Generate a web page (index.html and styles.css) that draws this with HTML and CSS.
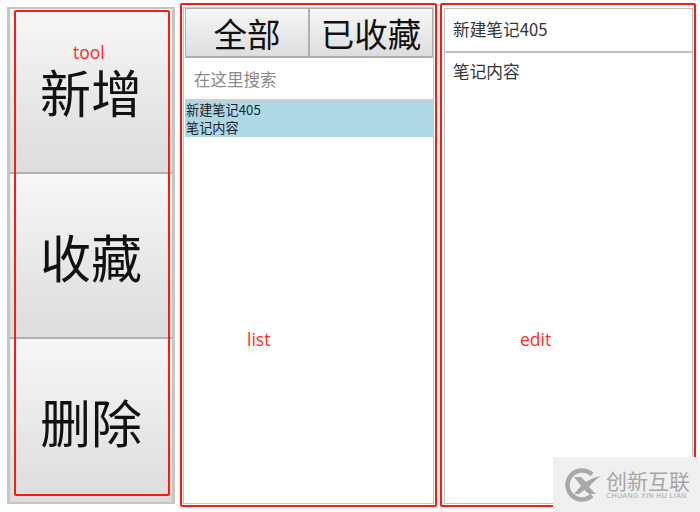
FILE: index.html
```html
<!DOCTYPE html>
<html lang="zh-CN">
<head>
<meta charset="utf-8">
<title>笔记</title>
<link rel="stylesheet" href="styles.css">
</head>
<body>
<main class="app">
  <section class="tool">
    <button class="big">新增</button>
    <button class="big">收藏</button>
    <button class="big">删除</button>
  </section>
  <section class="list">
    <div class="tabs">
      <button class="tab">全部</button>
      <button class="tab">已收藏</button>
    </div>
    <div class="search">在这里搜索</div>
    <div class="item">
      <div>新建笔记405</div>
      <div>笔记内容</div>
    </div>
  </section>
  <section class="edit">
    <div class="title">新建笔记405</div>
    <div class="content">笔记内容</div>
  </section>
</main>
<div class="mark mark-tool"></div>
<div class="mark mark-list"></div>
<div class="mark mark-edit"></div>
<span class="label label-tool">tool</span>
<span class="label label-list">list</span>
<span class="label label-edit">edit</span>
<div class="wm">
  <svg class="wm-logo" viewBox="0 0 36 34" width="36" height="34">
    <path d="M27 6.5 A14.5 14.5 0 1 0 27 27.5" fill="none" stroke="#a8a8a8" stroke-width="4.5"/>
    <path d="M9 9 L16 9 L21 14 C25 11 30 9 36 8 C31 11 27 15 24 19 L31 26 L24 26 L19.5 22 L14 26 L9 26 L16 18 Z" fill="#a8a8a8"/>
  </svg>
  <div class="wm-text">
    <div class="wm-cn">创新互联</div>
    <div class="wm-en">CHUANG XIN HU LIAN</div>
  </div>
</div>
</body>
</html>
```
FILE: styles.css
```css
* { box-sizing: border-box; }
html, body { margin: 0; height: 100%; }
body {
  position: relative;
  width: 700px;
  height: 512px;
  overflow: hidden;
  background: #fff;
  font-family: "Liberation Sans", "Noto Sans CJK SC", sans-serif;
}
.app {
  display: flex;
  height: 512px;
  padding: 7px 6px 7px 7px;
}
.tool {
  width: 168px;
  height: 497px;
  display: flex;
  flex-direction: column;
  background: #f0f0f0;
  border: 2px solid #c6c6c6;
}
.big {
  flex: 1;
  margin: 0;
  padding: 2px 0 0;
  border: 1px solid #c4c4c4;
  border-top: 0;
  border-bottom: 2px solid #b2b2b2;
  background: linear-gradient(#f7f7f7, #dcdcdc);
  color: #111;
  font-family: "Noto Sans CJK SC", sans-serif;
  font-size: 51px;
  line-height: 1;
}
.big:last-child { border-bottom: 0; }
.list {
  width: 251px;
  height: 497px;
  margin-left: 8px;
  display: flex;
  flex-direction: column;
  border: 1px solid #c8c8c8;
  padding: 0 0 0 1px;
}
.tabs { display: flex; height: 50px; }
.tab {
  flex: 1;
  margin: 0;
  padding: 0;
  border: 1px solid #b0b0b0;
  border-bottom-width: 2px;
  background: linear-gradient(#f7f7f7, #dddddd);
  color: #111;
  font-family: "Noto Sans CJK SC", sans-serif;
  font-size: 33.5px;
  line-height: 1;
}
.tab + .tab { border-left-width: 2px; margin-left: -1px; }
.search {
  height: 43px;
  padding: 10px 9px 0;
  font-size: 16.5px;
  line-height: 22px;
  color: #8a8a8a;
  border-bottom: 2px solid #d0d0d0;
  font-family: "Noto Sans CJK SC", sans-serif;
}
.item {
  height: 36px;
  padding-left: 1px;
  background: #add8e6;
  color: #222;
  font-family: "Noto Sans CJK SC", sans-serif;
  font-size: 13.2px;
  line-height: 18px;
}
.edit {
  width: 249px;
  height: 496px;
  margin-left: 10px;
  margin-top: 1px;
  display: flex;
  flex-direction: column;
  border: 1px solid #c0c0c0;
}
.title {
  height: 44px;
  padding: 9px 8px 0;
  font-size: 16.7px;
  line-height: 22px;
  color: #333;
  border-bottom: 2px solid #c0c0c0;
  font-family: "Noto Sans CJK SC", sans-serif;
}
.content {
  flex: 1;
  padding: 7px 8px;
  font-size: 16.7px;
  line-height: 22px;
  color: #333;
  font-family: "Noto Sans CJK SC", sans-serif;
}
.mark {
  position: absolute;
  border: 2.5px solid #ff1a10;
  border-radius: 2px;
}
.mark-tool { left: 14px; top: 10px; width: 156px; height: 486px; }
.mark-list { left: 180px; top: 3px; width: 257px; height: 504px; }
.mark-edit { left: 440px; top: 3px; width: 256px; height: 504px; }
.label {
  position: absolute;
  color: #ff2a20;
  font-family: "Open Sans", sans-serif;
  font-size: 17.5px;
  line-height: 20px;
}
.label-tool { left: 73px; top: 42px; }
.label-list { left: 247px; top: 329px; }
.label-edit { left: 520px; top: 329px; }
.wm {
  position: absolute;
  left: 553px;
  top: 457px;
  width: 147px;
  height: 55px;
  display: flex;
  align-items: center;
  gap: 5px;
  padding-left: 12px;
  background: #f0f0f0;
}
.wm-logo { flex: none; }
.wm-text { color: #a6a6a6; }
.wm-cn {
  font-family: "Noto Sans CJK SC", sans-serif;
  font-size: 21px;
  line-height: 20px;
  padding-top: 1px;
}
.wm-en {
  font-size: 7px;
  line-height: 8px;
  margin-top: 2px;
  letter-spacing: 0.4px;
  white-space: nowrap;
}
```
